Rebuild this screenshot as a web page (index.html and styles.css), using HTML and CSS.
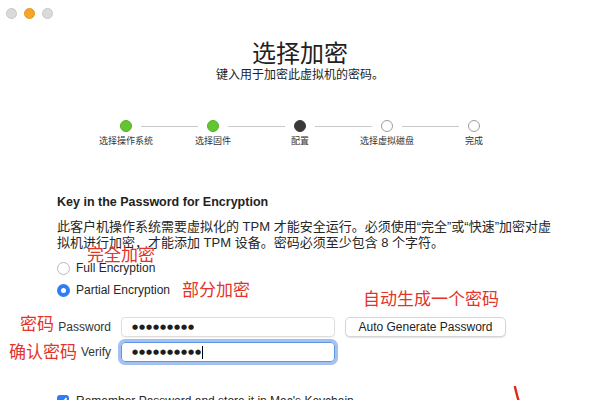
FILE: index.html
```html
<!DOCTYPE html>
<html lang="zh-CN">
<head>
    <meta charset="UTF-8">
    <title>选择加密</title>
    <link rel="stylesheet" href="styles.css">
</head>
<body>
    <div class="window">
        <div class="titlebar">
            <span class="light"></span>
            <span class="light light-min"></span>
            <span class="light"></span>
        </div>

        <header class="header">
            <h1>选择加密</h1>
            <p>键入用于加密此虚拟机的密码。</p>
        </header>

        <ol class="steps">
            <li class="step done"><span class="track"><span class="dot"></span></span><span class="step-label">选择操作系统</span></li>
            <li class="step done"><span class="track"><span class="dot"></span></span><span class="step-label">选择固件</span></li>
            <li class="step current"><span class="track"><span class="dot"></span></span><span class="step-label">配置</span></li>
            <li class="step"><span class="track"><span class="dot"></span></span><span class="step-label">选择虚拟磁盘</span></li>
            <li class="step"><span class="track"><span class="dot"></span></span><span class="step-label">完成</span></li>
        </ol>

        <section class="content">
            <h2>Key in the Password for Encryption</h2>
            <p class="note">此客户机操作系统需要虚拟化的 TPM 才能安全运行。必须使用“完全”或“快速”加密对虚拟机进行加密，才能添加 TPM 设备。密码必须至少包含 8 个字符。</p>

            <div class="radio-row"><span class="radio"></span>Full Encryption</div>
            <div class="radio-row"><span class="radio checked"></span>Partial Encryption</div>

            <div class="pw-grid">
                <span class="pw-label">Password</span>
                <div class="field"><span class="dots">●●●●●●●●●</span></div>
                <button class="gen-btn">Auto Generate Password</button>
                <span class="pw-label">Verify</span>
                <div class="field focused"><span class="dots">●●●●●●●●●●</span><span class="caret"></span></div>
            </div>

            <div class="check-row">
                <span class="checkbox">
                    <svg width="12" height="12" viewBox="0 0 12 12"><path d="M3 6.2 L5.1 8.3 L9 3.8" fill="none" stroke="#fff" stroke-width="1.8" stroke-linecap="round" stroke-linejoin="round"/></svg>
                </span>
                Remember Password and store it in Mac's Keychain
            </div>
        </section>

        <span class="note-red note-full">完全加密</span>
        <span class="note-red note-partial">部分加密</span>
        <span class="note-red note-auto">自动生成一个密码</span>
        <span class="note-red note-pw">密码</span>
        <span class="note-red note-verify">确认密码</span>
        <svg class="arrow-mark" width="12" height="16" viewBox="0 0 12 16"><path d="M2 1 C3 5 4 10 6 16" fill="none" stroke="#e3251d" stroke-width="2.4" stroke-linecap="round"/></svg>
    </div>
</body>
</html>
```

FILE: styles.css
```css
body {
    margin: 0;
    font-family: "Liberation Sans", "Noto Sans CJK SC", sans-serif;
    color: #262626;
    background: #fff;
}
.window {
    position: relative;
    width: 600px;
    height: 400px;
    overflow: hidden;
    background: #fff;
}
.titlebar {
    display: flex;
    align-items: center;
    gap: 7px;
    height: 26px;
    padding-left: 6px;
}
.light {
    width: 11px;
    height: 11px;
    border-radius: 50%;
    background: #dadada;
    border: 1px solid #c8c8c8;
    box-sizing: border-box;
}
.light-min {
    background: #f6a524;
    border-color: #e3961d;
}
.header {
    text-align: center;
    padding-top: 12px;
}
.header h1 {
    margin: 0;
    font-family: "Noto Sans CJK SC", sans-serif;
    font-size: 24px;
    font-weight: 400;
    line-height: 28px;
    color: #222;
}
.header p {
    margin: 0;
    font-family: "Noto Sans CJK SC", sans-serif;
    font-size: 12px;
    line-height: 16px;
    color: #222;
}
.steps {
    display: flex;
    justify-content: center;
    list-style: none;
    margin: 38px 0 0;
    padding: 0;
}
.step {
    display: flex;
    flex-direction: column;
    align-items: center;
    width: 87px;
}
.track {
    display: flex;
    align-items: center;
    gap: 9px;
    width: 100%;
}
.track::before,
.track::after {
    content: "";
    flex: 1;
    height: 1px;
    background: #c9c9c9;
}
.step:first-child .track::before,
.step:last-child .track::after {
    background: transparent;
}
.dot {
    width: 12px;
    height: 12px;
    border-radius: 50%;
    box-sizing: border-box;
    border: 1px solid #9d9d9d;
    background: #fff;
}
.done .dot {
    background: #63c530;
    border-color: #52b026;
}
.current .dot {
    background: #393939;
    border-color: #393939;
}
.step-label {
    margin-top: 3px;
    font-family: "Noto Sans CJK SC", sans-serif;
    font-size: 9px;
    line-height: 12px;
    color: #333;
}
.content {
    padding: 0 40px 0 57px;
}
.content h2 {
    margin: 47px 0 0;
    font-size: 12.5px;
    font-weight: 700;
    line-height: 16px;
    color: #222;
}
.note {
    margin: 9px 0 0;
    font-size: 13px;
    line-height: 16px;
    color: #262626;
}
.radio-row {
    display: flex;
    align-items: center;
    gap: 6px;
    height: 22px;
    font-size: 12px;
}
.radio-row:first-of-type {
    margin-top: 6px;
}
.radio {
    width: 13px;
    height: 13px;
    box-sizing: border-box;
    border-radius: 50%;
    border: 1px solid #b9b9b9;
    background: #fff;
}
.radio.checked {
    border: 4px solid #2f7df6;
    background: #fff;
}
.pw-grid {
    display: grid;
    grid-template-columns: 54px 214px auto;
    column-gap: 10px;
    row-gap: 5px;
    align-items: center;
    margin-top: 16px;
    font-size: 12px;
}
.pw-label {
    text-align: right;
    color: #333;
}
.field {
    display: flex;
    align-items: center;
    height: 20px;
    box-sizing: border-box;
    padding-left: 10px;
    border: 1px solid #dedede;
    border-radius: 4px;
    box-shadow: 0 1px 1px rgba(0, 0, 0, 0.05);
}
.field.focused {
    border-color: #5e96e6;
    box-shadow: 0 0 0 3px rgba(112, 160, 232, 0.65);
}
.dots {
    font-family: "DejaVu Sans", sans-serif;
    font-size: 7px;
    letter-spacing: 0.9px;
    color: #1d1d1d;
}
.caret {
    width: 1px;
    height: 13px;
    background: #000;
}
.gen-btn {
    justify-self: start;
    width: 161px;
    height: 20px;
    padding: 0;
    font-family: "Liberation Sans", sans-serif;
    font-size: 12px;
    color: #222;
    background: #fff;
    border: 1px solid #d6d6d6;
    border-radius: 5px;
    box-shadow: 0 1px 1px rgba(0, 0, 0, 0.12);
}
.check-row {
    display: flex;
    align-items: center;
    gap: 7px;
    margin-top: 31px;
    height: 16px;
    font-size: 12px;
}
.checkbox {
    display: flex;
    width: 12px;
    height: 12px;
    border-radius: 3px;
    background: #2f7df6;
}
.note-red {
    position: absolute;
    font-family: "Noto Sans CJK SC", sans-serif;
    font-size: 17px;
    line-height: 20px;
    color: #e3342b;
    white-space: nowrap;
}
.note-full { left: 87px; top: 244px; }
.note-partial { left: 182px; top: 279px; }
.note-auto { left: 363px; top: 288px; }
.note-pw { left: 20px; top: 313px; }
.note-verify { left: 9px; top: 341px; }
.arrow-mark {
    position: absolute;
    left: 513px;
    top: 386px;
}
```
